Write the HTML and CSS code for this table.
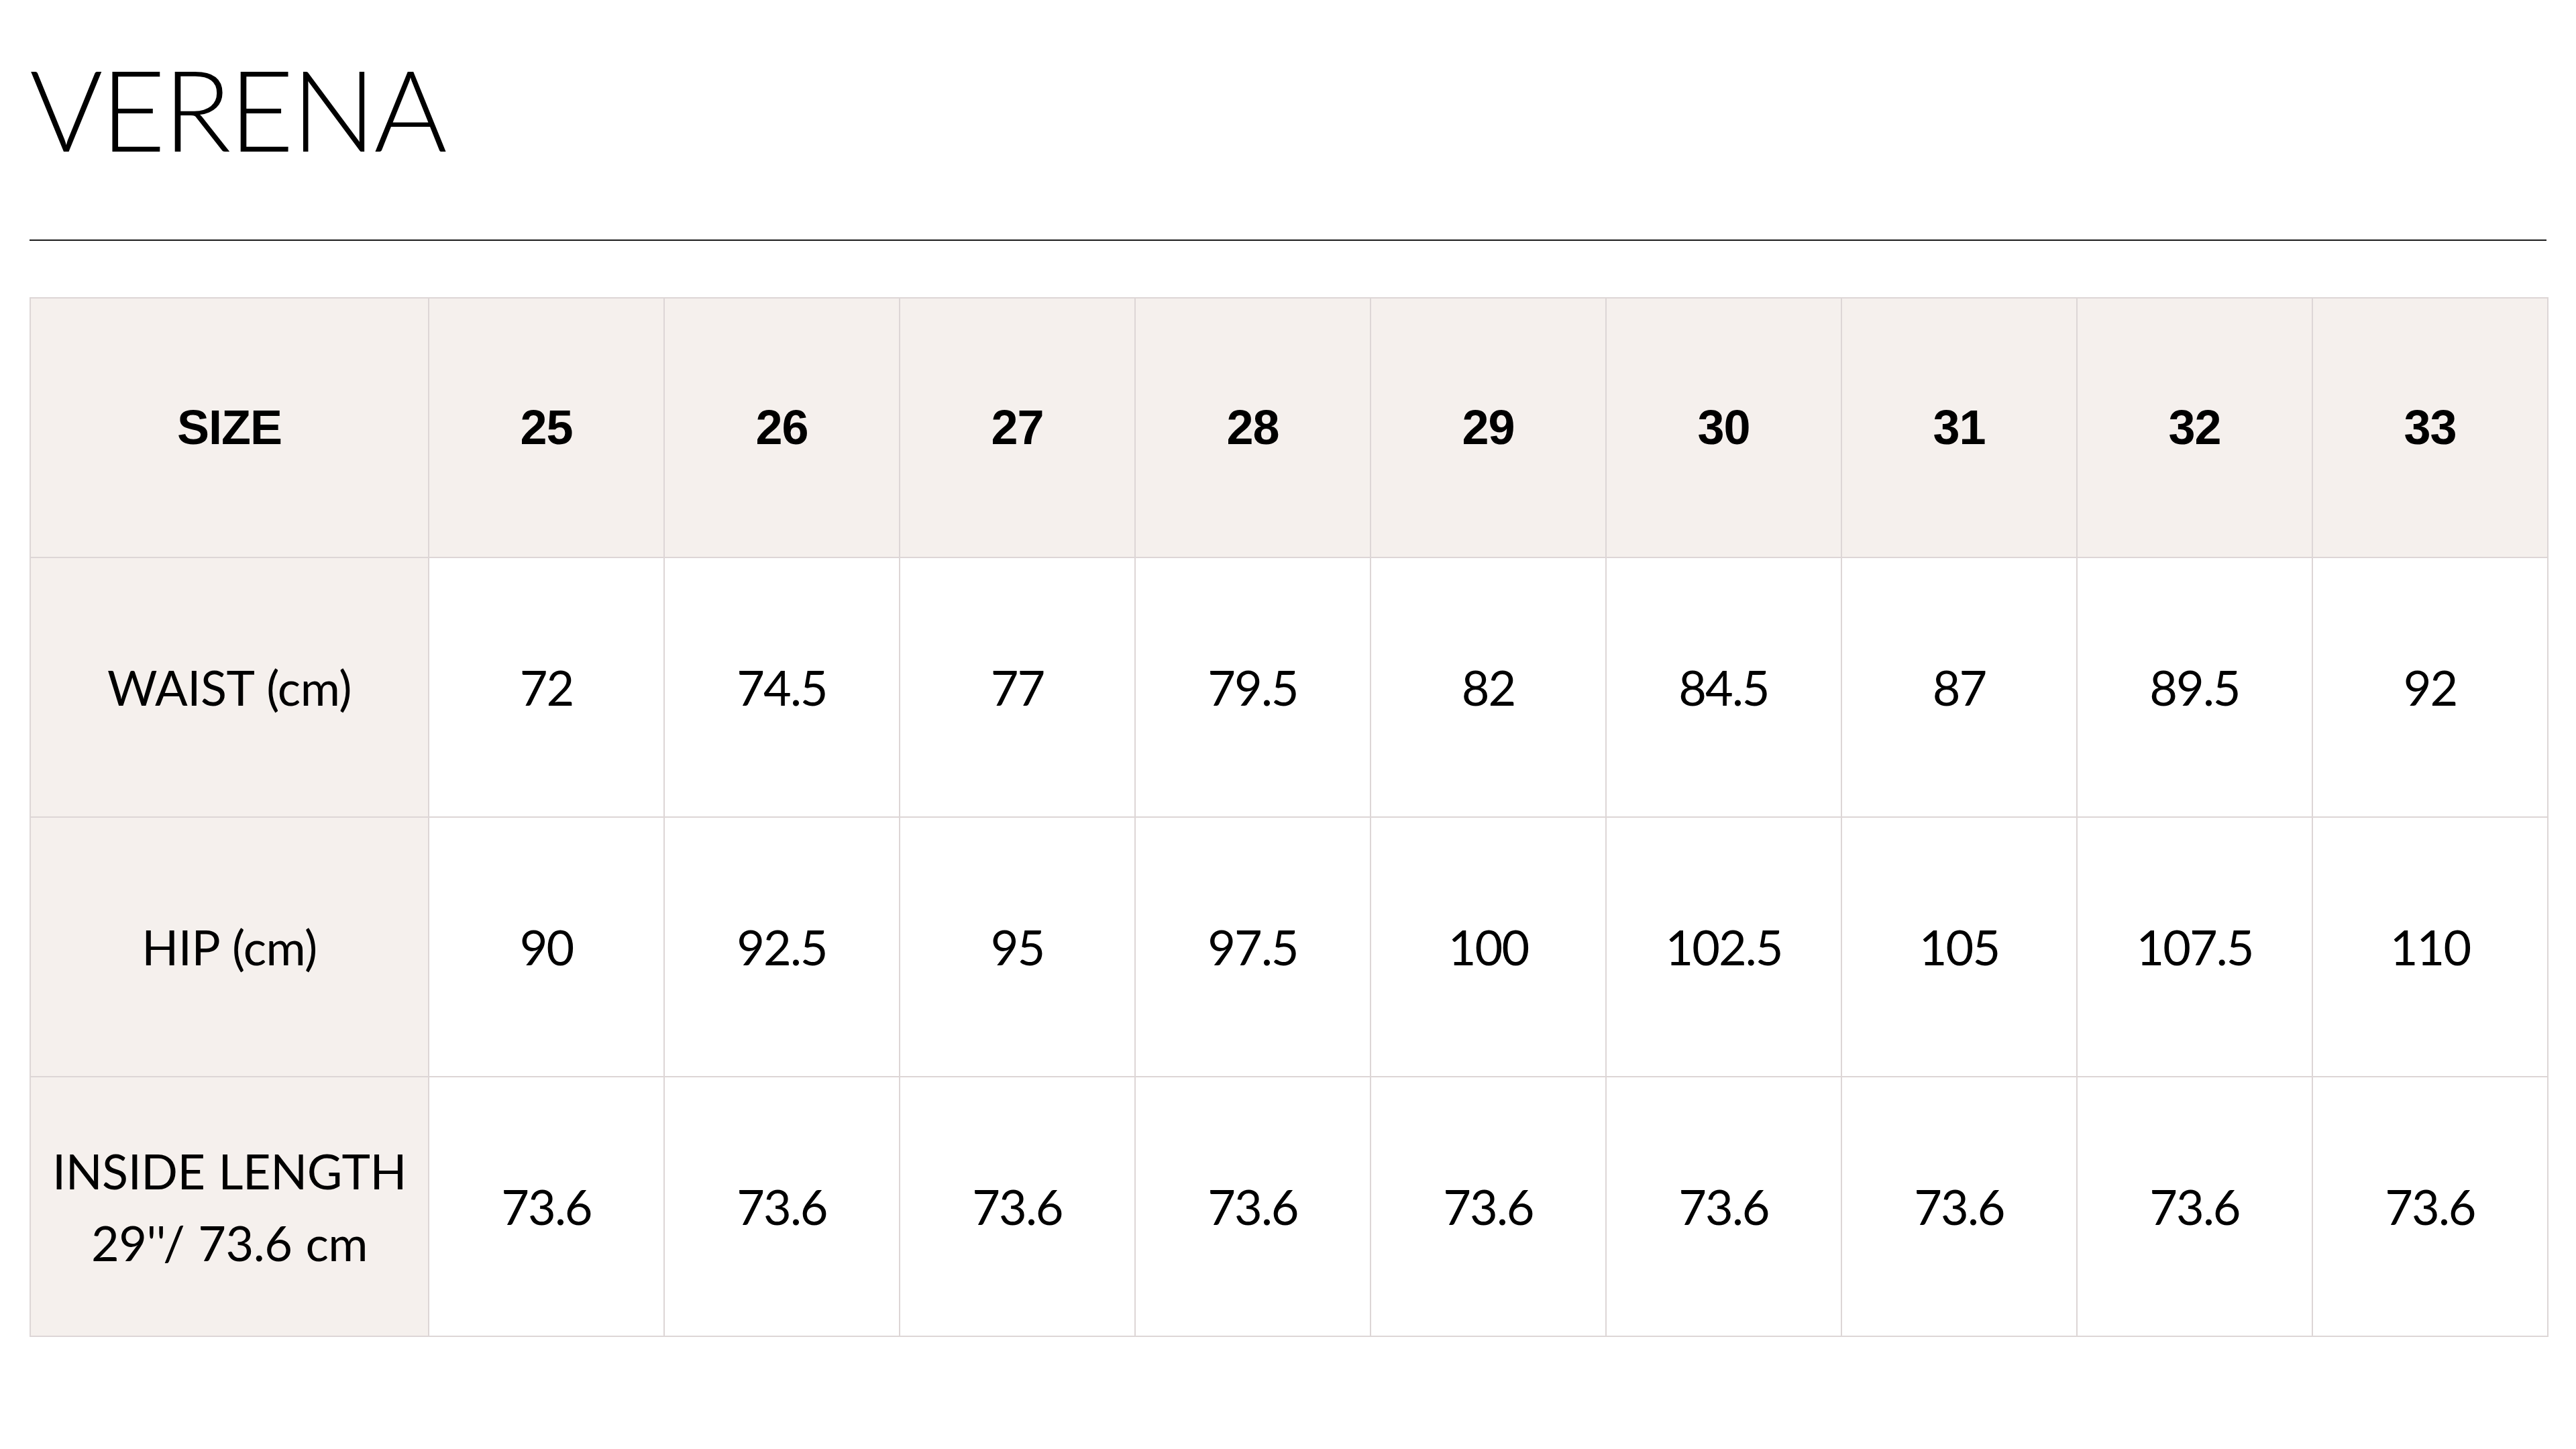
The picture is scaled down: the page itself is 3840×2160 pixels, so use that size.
FILE: index.html
```html
<!DOCTYPE html>
<html lang="en">
<head>
<meta charset="utf-8">
<title>VERENA</title>
<link rel="stylesheet" href="styles.css">
</head>
<body>
<main class="page">
  <h1 class="title">VERENA</h1>
  <hr class="rule">
  <table class="sizes">
    <colgroup>
      <col class="c-label">
      <col span="9" class="c-val">
    </colgroup>
    <thead>
      <tr>
        <th class="label">SIZE</th>
        <th>25</th><th>26</th><th>27</th><th>28</th><th>29</th><th>30</th><th>31</th><th>32</th><th>33</th>
      </tr>
    </thead>
    <tbody>
      <tr>
        <th class="label">WAIST (cm)</th>
        <td>72</td><td>74.5</td><td>77</td><td>79.5</td><td>82</td><td>84.5</td><td>87</td><td>89.5</td><td>92</td>
      </tr>
      <tr>
        <th class="label">HIP (cm)</th>
        <td>90</td><td>92.5</td><td>95</td><td>97.5</td><td>100</td><td>102.5</td><td>105</td><td>107.5</td><td>110</td>
      </tr>
      <tr>
        <th class="label">INSIDE LENGTH<br>29''/ 73.6 cm</th>
        <td>73.6</td><td>73.6</td><td>73.6</td><td>73.6</td><td>73.6</td><td>73.6</td><td>73.6</td><td>73.6</td><td>73.6</td>
      </tr>
    </tbody>
  </table>
</main>
</body>
</html>
```
FILE: styles.css
```css
html, body {
  margin: 0;
  padding: 0;
  background: #ffffff;
}

.page {
  padding: 78px 44px 0 44px;
  color: #000000;
  font-family: Lato, "Noto Sans", sans-serif;
}

.title {
  margin: 0;
  font-family: Lato, "Noto Sans", sans-serif;
  font-weight: 300;
  font-size: 167px;
  line-height: 1;
  letter-spacing: -3.5px;
}

.rule {
  margin: 112px 0 0 0;
  border: 0;
  height: 2px;
  background: #1a1a1a;
}

.sizes {
  margin-top: 84px;
  width: 3753px;
  table-layout: fixed;
  border-collapse: collapse;
}

.c-label { width: 594px; }
.c-val { width: 351px; }

.sizes th,
.sizes td {
  height: 385px;
  padding: 0;
  border: 2px solid #ddd6d6;
  text-align: center;
  vertical-align: middle;
  font-size: 72px;
  line-height: 107px;
  font-weight: 400;
  letter-spacing: -2px;
  font-family: Lato, "Noto Sans", sans-serif;
}

.sizes thead th {
  background: #f5f0ed;
  font-family: "Liberation Sans", Arial, sans-serif;
  font-weight: 700;
  font-size: 72px;
  letter-spacing: -1px;
}

.sizes tbody th.label {
  background: #f5f0ed;
  font-weight: 400;
  letter-spacing: -0.5px;
  word-spacing: 2px;
}
```
